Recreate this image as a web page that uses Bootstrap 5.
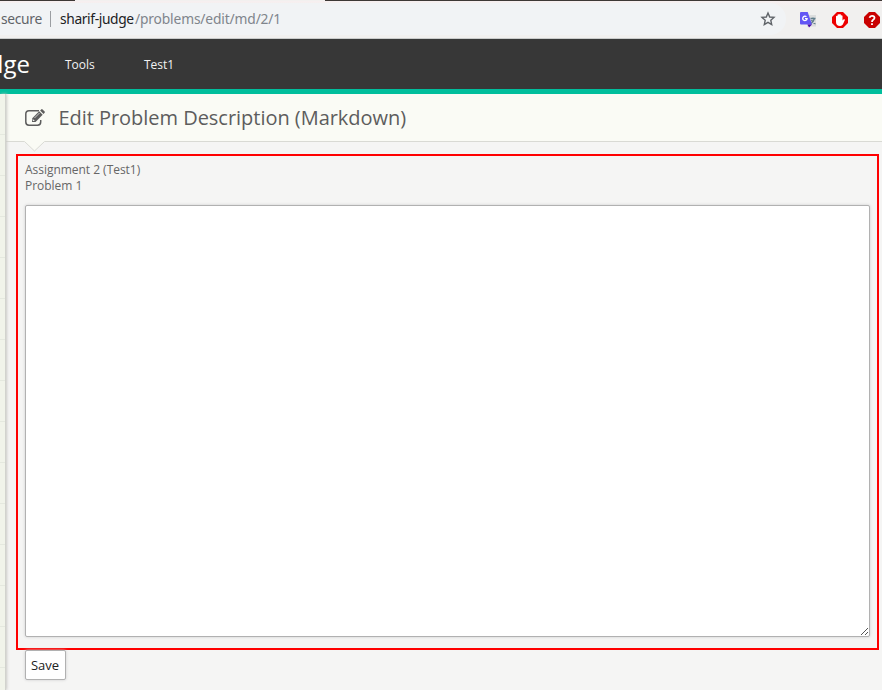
<!DOCTYPE html>
<html lang="en">
<head>
<meta charset="utf-8">
<title>Edit Problem Description</title>
<link href="https://cdn.jsdelivr.net/npm/bootstrap@5.3.0/dist/css/bootstrap.min.css" rel="stylesheet">
<style>
body{font-family:"Open Sans",sans-serif;font-size:12px;line-height:16px;color:#666;background:#f5f5f4;height:690px}
.browser-bar{height:39px;background:linear-gradient(#f7eff0,#f1f0ef 6px);border-top:1px solid #3d3835;border-bottom:1px solid #c9cbcb;font-family:"Noto Sans",sans-serif;color:#80858c}
.tab-edge{height:1px;width:250px;margin-left:75px;background:#f2f0ef;top:-1px;left:0}
.addr{width:786px;height:32px;padding-left:1px;white-space:nowrap;background:#f1f3f5;border-radius:0 16px 16px 0;margin-bottom:1px}
.addr span{display:block;line-height:20px;font-size:13.8px;margin-top:-1px}
.w-secure{width:49px;color:#5f6368;letter-spacing:-.3px}
.host{width:75px;color:#202124;letter-spacing:-.37px}
.path{letter-spacing:-.15px}
.sep{width:1px;height:16px;background:#9b9ea2;margin-right:9px}
.ext-bar{width:96px;height:37px}
.top-nav{height:55px;background:#373737;border-bottom:5px solid #00be9c;color:#f2f2f2}
.top-nav .item{padding-top:1px}
.brand-tail{width:30px;font-size:24px;line-height:34px;color:#fff;margin-right:35px;padding-bottom:1px}
.side{width:6px;background:repeating-linear-gradient(#f1f4ea 0 40px,#e5e9df 40px 41px);border-right:1px solid #d2d3ce;box-shadow:1px 0 3px #c9c9c5;z-index:1}
.page-head{height:48px;background:#fafbf5;border-bottom:1px solid #d9dad4;padding-left:19px}
.page-head h1{font-size:20px;line-height:28px;letter-spacing:-.03px;font-weight:400;color:#5d5d5d;margin:0 0 0 12.4px}
.notch{left:18px;top:46px}
.outlined{border:2px solid red;margin:12px 3px 0 10px;height:496px;padding:6px 7px 0}
.caption-line{letter-spacing:-.03px}
.editor{height:432px;margin-top:11px;resize:none;border:1px solid #b1b1b1;border-radius:2px;box-shadow:0 0 3px #ccc;background:#fff}
.grip{right:1px;bottom:1px}
.save{width:41px;height:30px;margin-left:19px;padding:0 1px 0 0;font-size:13px;line-height:28px;color:#222;background:#fff;border:1px solid #b1b1b1;border-radius:2px;box-shadow:0 0 3px #ccc}
</style>
</head>
<body class="d-flex flex-column overflow-hidden">
<header class="browser-bar d-flex align-items-center position-relative flex-shrink-0">
  <div class="tab-edge position-absolute"></div>
  <div class="addr d-flex align-items-center flex-shrink-0"><span class="w-secure">secure</span><i class="sep"></i><span class="host">sharif-judge</span><span class="path">/problems/edit/md/2/1</span>
    <svg class="ms-auto" style="margin-right:10px" width="16" height="16" viewBox="0 0 16 16" fill="none" stroke="#5f6368" stroke-width="1.4"><path d="M8 2l1.700 4 4.300.4-3.200 2.900.9 4.300L8 11.400l-3.700 2.200.9-4.300L2 6.400 6.300 6z"/></svg>
  </div>
  <div class="ext-bar d-flex align-items-center flex-shrink-0">
    <svg width="96" height="20" viewBox="0 0 96 20">
      <path d="M21 5h9v11.500h-9z" fill="#dcdddd"/><path d="M24.500 8.500h5m-2.500-1v1m1.500 0q-1 3.500-4 5.500m1-4q1 3 4 4" fill="none" stroke="#607d8b" stroke-width="1.300"/>
      <path d="M15 2h6.700L26 14.500H15q-1 0-1-1V3q0-1 1-1z" fill="#6356f5"/><path d="M21.500 14.500H26L23 17.500z" fill="#4b0aa9"/>
      <path d="M20.400 6.800a2.200 2.200 0 1 0 .7 1.900H19" fill="none" stroke="#fff" stroke-width="1.300"/>
      <path d="M51 2h6l5 5v6l-5 5h-6l-5-5V7z" fill="#ed0000"/>
      <path d="M50 10.500V6.300q.8-1 1.500-.2V4.700q.8-1 1.600-.2 1-1 1.800.2v.9q1.200-.7 1.600.4v4.500l1.200-1.300q1.200-.3 1.300.6l-2.200 4.800q-.8 1.400-2.600 1.400-4.200 0-4.200-4z" fill="#fff"/>
      <path d="M83 2h6l5 5v6l-5 5h-6l-5-5V7z" fill="#c90000"/>
      <path d="M83.500 7.700Q84 5.800 86 5.800q2.500 0 2.500 2 0 1.200-1.300 2-1.200.8-1.200 2.200m0 1.300v1.800" fill="none" stroke="#fff" stroke-width="1.800"/>
    </svg>
  </div>
</header>
<nav class="top-nav d-flex align-items-center flex-shrink-0">
  <div class="brand-tail d-flex justify-content-end flex-shrink-0"><span>dge</span></div>
  <span class="item me-5" style="width:31px">Tools</span><span class="item">Test1</span>
</nav>
<div class="d-flex flex-grow-1">
  <aside class="side flex-shrink-0"></aside>
  <main class="flex-grow-1">
    <div class="page-head d-flex align-items-center position-relative">
      <svg width="21" height="18" viewBox="0 0 21 18" fill="none" stroke="#5d5d5d"><path d="M14 1.800H4Q.8 1.800.8 5v8q0 3.200 3.200 3.200h8.500q3.200 0 3.200-3.200v-2" stroke-width="1.500"/><path d="M7 13V9.500L14.200 2.300l3.500 3.500L10.500 13z" fill="#5d5d5d" stroke="none"/><path d="M15.100 1.500L16.200.4q.7-.6 1.400 0l2 2q.7.7 0 1.400l-1.100 1.100z" fill="#5d5d5d" stroke="none"/><path d="M9.500 9l5-5" stroke="#fafbf5" stroke-width=".7"/><path d="M8 10.300v1.200h1.400" stroke="#fafbf5" stroke-width=".9"/></svg>
      <h1>Edit Problem Description (Markdown)</h1>
      <svg class="notch position-absolute" width="21" height="12" viewBox="0 0 21 12"><path d="M0 0h21v1L10.500 11 0 1z" fill="#fafbf5"/><path d="M.5 1.500l10 9.500 10-9.500" fill="none" stroke="#d9dad4"/></svg>
    </div>
    <section class="outlined">
      <div class="caption-line">Assignment 2 (Test1)</div><div class="caption-line">Problem 1</div>
      <div class="position-relative">
        <textarea class="editor d-block w-100" aria-label="Description"></textarea>
        <svg class="grip position-absolute" width="9" height="9" viewBox="0 0 9 9" stroke="#555" stroke-width="1"><path d="M1 8l7-7M5 8l3-3"/></svg>
      </div>
    </section>
    <button class="save d-block" type="button">Save</button>
  </main>
</div>
<script src="https://cdn.jsdelivr.net/npm/bootstrap@5.3.0/dist/js/bootstrap.bundle.min.js"></script>
</body>
</html>
